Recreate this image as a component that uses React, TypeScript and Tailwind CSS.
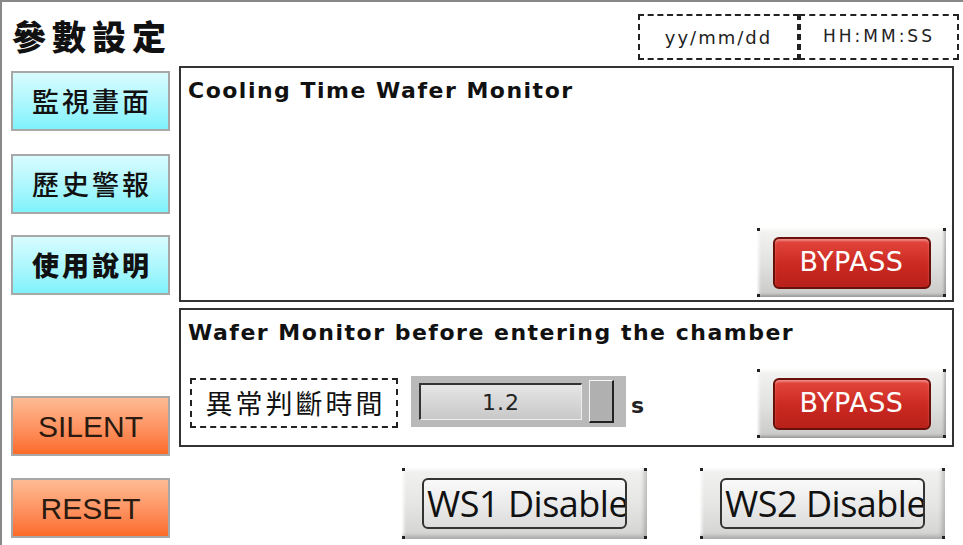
import React from "react";

const cjk = { fontFamily: '"Noto Sans CJK TC", "Noto Sans CJK SC", sans-serif' };
const dv = { fontFamily: '"DejaVu Sans", "Liberation Sans", sans-serif' };
const ar = { fontFamily: '"Liberation Sans", Arial, sans-serif' };

function NavBtn({ label, bold }: { label: string; bold?: boolean }) {
  return (
    <div
      className="h-[60px] w-[159px] border-2 border-[#a8a8a8] bg-gradient-to-b from-[#d8fcff] to-[#7ef2fb] flex items-center justify-center text-[#111] text-[27px] tracking-[3px] pl-[3px]"
      style={{ ...cjk, fontWeight: bold ? 900 : 500 }}
    >
      {label}
    </div>
  );
}

function OrangeBtn({ label }: { label: string }) {
  return (
    <div
      className="h-[60px] w-[159px] border-2 border-[#a8a8a8] bg-gradient-to-b from-[#fdbb94] to-[#fb6a27] flex items-center justify-center text-[#2a1a10] text-[30px]"
      style={ar}
    >
      {label}
    </div>
  );
}

function Corners() {
  return (
    <>
      <span className="absolute left-0 top-0 w-[3px] h-[3px] bg-[#222]" />
      <span className="absolute right-0 top-0 w-[3px] h-[3px] bg-[#222]" />
      <span className="absolute left-0 bottom-0 w-[3px] h-[3px] bg-[#222]" />
      <span className="absolute right-0 bottom-0 w-[3px] h-[3px] bg-[#222]" />
    </>
  );
}

function Bypass() {
  return (
    <div className="relative w-[189px] h-[69px] bg-gradient-to-b from-[#f4f4f2] via-[#e2e2e0] to-[#c9c9c7] flex items-center justify-center shadow-[inset_-2px_-2px_3px_rgba(0,0,0,0.25),inset_2px_2px_3px_rgba(255,255,255,0.9)]">
      <Corners />
      <div
        className="w-[158px] h-[52px] rounded-[6px] border-2 border-[#6a100c] bg-gradient-to-b from-[#e4473e] via-[#cc2a22] to-[#b8201a] flex items-center justify-center text-white text-[27px] tracking-[0.5px] shadow-[inset_0_2px_2px_rgba(255,255,255,0.35)]"
        style={dv}
      >
        BYPASS
      </div>
    </div>
  );
}

function WsBtn({ label }: { label: string }) {
  return (
    <div className="relative w-[245px] h-[71px] bg-gradient-to-b from-[#f2f2f0] via-[#e6e6e4] to-[#d2d2d0] flex items-center justify-center shadow-[inset_-3px_-3px_4px_rgba(0,0,0,0.2),inset_2px_2px_3px_rgba(255,255,255,0.9)]">
      <Corners />
      <div
        className="w-[205px] h-[51px] rounded-[6px] border-2 border-[#333] bg-gradient-to-b from-[#fafafa] to-[#dcdcdc] flex items-center justify-start text-[#111] text-[36px] whitespace-nowrap overflow-hidden"
        style={{ fontFamily: '"Open Sans", "DejaVu Sans", sans-serif' }}
      >
        <span className="ml-[3px] tracking-[-0.5px]">{label}</span>
      </div>
    </div>
  );
}

export default function App() {
  return (
    <div className="w-[963px] h-[545px] bg-white border-t-2 border-l-2 border-[#888] overflow-hidden">
      {/* header */}
      <div className="h-[64px] flex items-start">
        <div className="pl-[10px] pt-[13px] text-[34px] font-black text-[#111] tracking-[6px] leading-[42px]" style={cjk}>
          參數設定
        </div>
        <div className="ml-auto mr-[4px] mt-[12px] flex">
          <div className="w-[161px] h-[46px] border-2 border-dashed border-[#222] flex items-center justify-center text-[18px] text-[#222] tracking-[2px]" style={dv}>
            yy/mm/dd
          </div>
          <div className="w-[160px] h-[46px] border-2 border-dashed border-[#222] flex items-center justify-center text-[17px] text-[#222] tracking-[3px]" style={dv}>
            HH:MM:SS
          </div>
        </div>
      </div>
      {/* body */}
      <div className="flex">
        <div className="w-[177px] pl-[9px] pt-[5px] flex flex-col">
          <NavBtn label="監視畫面" />
          <div className="h-[23px]" />
          <NavBtn label="歷史警報" />
          <div className="h-[21px]" />
          <NavBtn label="使用說明" bold />
          <div className="h-[101px]" />
          <OrangeBtn label="SILENT" />
          <div className="h-[22px]" />
          <OrangeBtn label="RESET" />
        </div>
        <div className="w-[775px] flex flex-col">
          {/* panel 1 */}
          <div className="h-[236px] border-2 border-[#333] flex flex-col pl-[7px] pr-[6px]">
            <div className="pt-[8px] text-[22px] font-bold text-[#111] leading-[30px] tracking-[1.5px]" style={dv}>
              Cooling Time Wafer Monitor
            </div>
            <div className="mt-auto mb-[3px] self-end">
              <Bypass />
            </div>
          </div>
          <div className="h-[6px]" />
          {/* panel 2 */}
          <div className="h-[139px] border-2 border-[#333] flex flex-col pl-[7px] pr-[6px]">
            <div className="pt-[8px] text-[22px] font-bold text-[#111] leading-[30px] tracking-[1.5px]" style={dv}>
              Wafer Monitor before entering the chamber
            </div>
            <div className="flex items-start mt-[21px]">
              <div className="mt-[9px] ml-[2px] w-[208px] h-[50px] border-2 border-dashed border-[#222] flex items-center justify-center text-[27px] text-[#111] tracking-[3px] pl-[3px]" style={cjk}>
                異常判斷時間
              </div>
              <div className="ml-[13px] mt-[7px] w-[215px] h-[51px] bg-[#b9b9b9] flex items-center pl-[8px]">
                <div className="w-[163px] h-[37px] border-t-2 border-l-2 border-[#333] border-b border-r border-b-[#eee] border-r-[#eee] bg-gradient-to-b from-[#e6e6e6] to-[#c8c8c8] flex items-center justify-center text-[22px] text-[#222] tracking-[1px]" style={dv}>
                  1.2
                </div>
                <div className="ml-[7px] w-[25px] h-[43px] bg-[#b0b0b0] border-t border-l border-[#f5f5f5] border-b-2 border-r-2 border-b-[#222] border-r-[#222]" />
              </div>
              <div className="ml-[5px] mt-[20px] text-[22px] font-bold text-[#222]" style={dv}>
                s
              </div>
              <div className="ml-auto">
                <Bypass />
              </div>
            </div>
          </div>
          {/* ws buttons */}
          <div className="flex mt-[21px]">
            <div className="ml-[223px]">
              <WsBtn label="WS1 Disable" />
            </div>
            <div className="ml-[53px]">
              <WsBtn label="WS2 Disable" />
            </div>
          </div>
        </div>
      </div>
    </div>
  );
}
